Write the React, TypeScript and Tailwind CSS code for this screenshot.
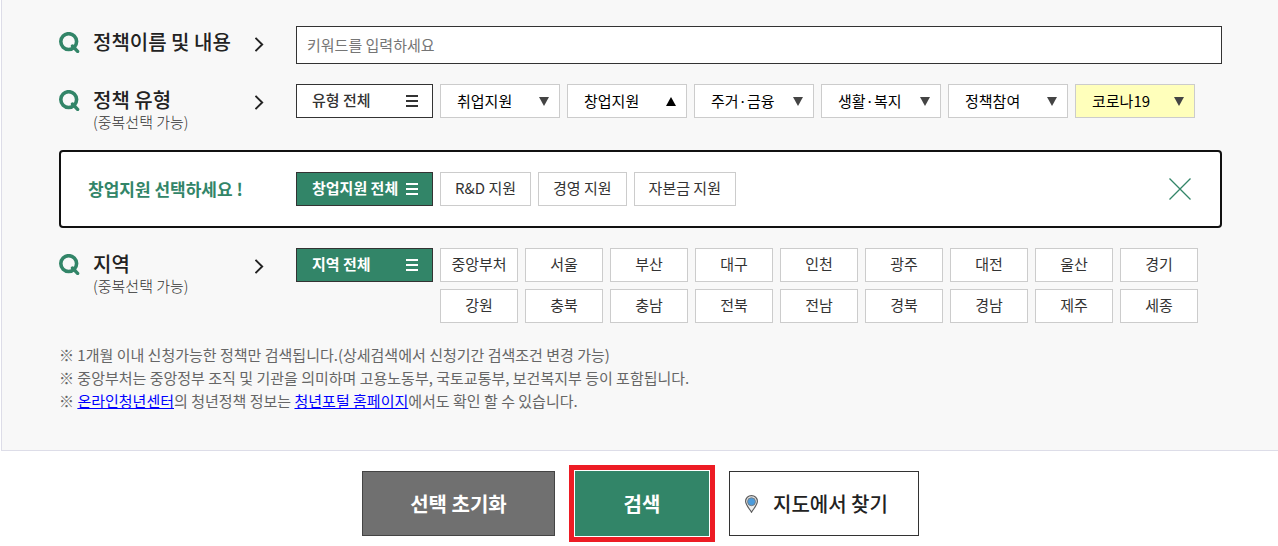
import { useState } from "react";
import type { ReactNode } from "react";

const types = [
  { name: "취업지원" },
  { name: "창업지원" },
  { name: "주거·금융" },
  { name: "생활·복지" },
  { name: "정책참여" },
  { name: "코로나19", highlight: true },
];

const startupOptions = ["R&D 지원", "경영 지원", "자본금 지원"];

const regions = [
  "중앙부처", "서울", "부산", "대구", "인천", "광주", "대전", "울산", "경기",
  "강원", "충북", "충남", "전북", "전남", "경북", "경남", "제주", "세종",
];

function SearchIcon() {
  return (
    <svg className="mt-1.5 shrink-0" width="21" height="21" viewBox="0 0 21 21" fill="none" stroke="#328568" aria-hidden="true">
      <circle cx="9.7" cy="9.6" r="7.9" strokeWidth="3.6" />
      <path d="M13.5 14L18.6 19.4" strokeWidth="3.4" strokeLinecap="round" />
    </svg>
  );
}

function Chevron() {
  return (
    <svg className="mt-[11px] shrink-0" width="9" height="16" viewBox="0 0 9 16" fill="none" stroke="#222" strokeWidth="1.9" aria-hidden="true">
      <path d="M.5 .8L7.2 7.5L.5 14.2" />
    </svg>
  );
}

function Bars() {
  return (
    <svg className="shrink-0" width="12" height="12" viewBox="0 0 12 12" fill="currentColor" aria-hidden="true">
      <path d="M0 0h12v2H0zM0 5h12v2H0zM0 10h12v2H0z" />
    </svg>
  );
}

function Arrow({ up }: { up: boolean }) {
  return (
    <svg className="shrink-0" width="10" height="9" viewBox="0 0 10 9" aria-hidden="true">
      {up ? <path d="M5 0L10 9H0z" fill="#000" /> : <path d="M0 0H10L5 9z" fill="#444" />}
    </svg>
  );
}

function Row({ label, note, htmlFor, children }: { label: string; note?: string; htmlFor?: string; children: ReactNode }) {
  const title = "block pt-0.5 text-[20px] leading-7 font-medium text-[#222]";
  return (
    <div className="flex items-start">
      <div className="flex w-[237px] shrink-0 items-start">
        <SearchIcon />
        <div className="ml-[13px] w-[162px]">
          {htmlFor ? <label htmlFor={htmlFor} className={title}>{label}</label> : <h2 className={title}>{label}</h2>}
          {note && <p className="text-[15px] leading-4 font-light text-[#333]">{note}</p>}
        </div>
        <Chevron />
      </div>
      {children}
    </div>
  );
}

function AllButton({ label, green }: { label: string; green?: boolean }) {
  return (
    <button
      type="button"
      className={
        "flex h-[34px] w-[137px] shrink-0 items-center justify-between border border-[#333] pr-3.5 pl-[15px] text-[15px] " +
        (green ? "bg-[#328568] font-bold text-white" : "bg-white font-medium text-[#333]")
      }
    >
      <span className="pb-0.5">{label}</span>
      <Bars />
    </button>
  );
}

export default function App() {
  const [open, setOpen] = useState("창업지원");
  return (
    <main className="bg-white pl-px font-['Noto_Sans_CJK_KR','Noto_Sans',sans-serif]">
      <form onSubmit={(e) => e.preventDefault()}>
        <div className="flex flex-col gap-5 border-b border-l border-[#dddde8] bg-[#f8f8f8] pt-[26px] pr-14 pb-[38px] pl-[57px]">
          <Row label="정책이름 및 내용" htmlFor="keyword">
            <input
              id="keyword"
              type="text"
              placeholder="키워드를 입력하세요"
              className="h-[38px] min-w-0 flex-1 border border-[#333] bg-white px-2.5 pb-0.5 text-[15px] text-[#333] placeholder:text-[#757575]"
            />
          </Row>

          <Row label="정책 유형" note="(중복선택 가능)">
            <div className="flex flex-wrap gap-[7px]">
              <AllButton label="유형 전체" />
              {types.map((t) => (
                <button
                  key={t.name}
                  type="button"
                  aria-expanded={open === t.name}
                  onClick={() => setOpen(t.name)}
                  className={
                    "flex h-[34px] w-[120px] items-center justify-between border border-[#ccc] pr-2.5 pl-4 text-[15px] leading-8 text-black " +
                    (t.highlight ? "bg-[#ffffbb]" : "bg-white")
                  }
                >
                  {t.name}
                  <Arrow up={open === t.name} />
                </button>
              ))}
            </div>
          </Row>

          <section className="flex items-center rounded-sm border-2 border-[#111] bg-white py-5 pr-[29px] pl-[27px]">
            <h3 className="w-52 shrink-0 text-[17px] leading-8 font-bold text-[#328568]">창업지원 선택하세요 !</h3>
            <div className="flex flex-1 flex-wrap gap-[7px]">
              <AllButton label="창업지원 전체" green />
              {startupOptions.map((s) => (
                <button key={s} type="button" className="h-[34px] border border-[#ccc] bg-white px-3.5 pb-0.5 text-[15px] text-[#333]">
                  {s}
                </button>
              ))}
            </div>
            <button type="button" aria-label="닫기">
              <svg width="22" height="22" viewBox="0 0 22 22" stroke="#328568" strokeWidth="1.3" aria-hidden="true">
                <path d="M.5 .5L21.5 21.5M21.5 .5L.5 21.5" />
              </svg>
            </button>
          </section>

          <Row label="지역" note="(중복선택 가능)">
            <div className="flex flex-1 gap-[7px]">
              <AllButton label="지역 전체" green />
              <div className="flex flex-wrap gap-[7px]">
                {regions.map((r) => (
                  <button key={r} type="button" className="h-[34px] w-[78px] border border-[#ccc] bg-white pb-0.5 text-[15px] text-[#333]">
                    {r}
                  </button>
                ))}
              </div>
            </div>
          </Row>

          <div className="text-[15px] leading-[23px] text-[#666]">
            <p>※ 1개월 이내 신청가능한 정책만 검색됩니다.(상세검색에서 신청기간 검색조건 변경 가능)</p>
            <p>※ 중앙부처는 중앙정부 조직 및 기관을 의미하며 고용노동부, 국토교통부, 보건복지부 등이 포함됩니다.</p>
            <p>
              ※ <a href="#center" className="text-[#0000ff] underline">온라인청년센터</a>의 청년정책 정보는{" "}
              <a href="#portal" className="text-[#0000ff] underline">청년포털 홈페이지</a>에서도 확인 할 수 있습니다.
            </p>
          </div>
        </div>

        <div className="flex justify-center gap-5 py-5 pl-0.5 text-[20px] leading-8">
          <button type="reset" className="h-[65px] w-[193px] border border-[#444] bg-[#707070] font-bold text-white">선택 초기화</button>
          <button type="submit" className="h-[65px] w-[134px] bg-[#328568] font-bold text-white outline-5 outline-offset-1 outline-[#ed1c24]">검색</button>
          <button type="button" className="flex h-[65px] w-[190px] items-center gap-[15px] border border-[#333] bg-white pl-[15px] font-medium text-[#222]">
            <svg width="13" height="18" viewBox="0 0 13 18" aria-hidden="true">
              <path d="M6.5 .6C3.2 .6 .6 3.1 .6 6.3C.6 9.8 4 13.2 6.5 17.2C9 13.2 12.4 9.8 12.4 6.3C12.4 3.1 9.8 .6 6.5 .6Z" fill="#eee" stroke="#5c5c5c" strokeWidth="1.2" />
              <circle cx="6.5" cy="6.7" r="4" fill="#4b9bdc" stroke="#777" strokeWidth=".9" />
            </svg>
            지도에서 찾기
          </button>
        </div>
      </form>
    </main>
  );
}
